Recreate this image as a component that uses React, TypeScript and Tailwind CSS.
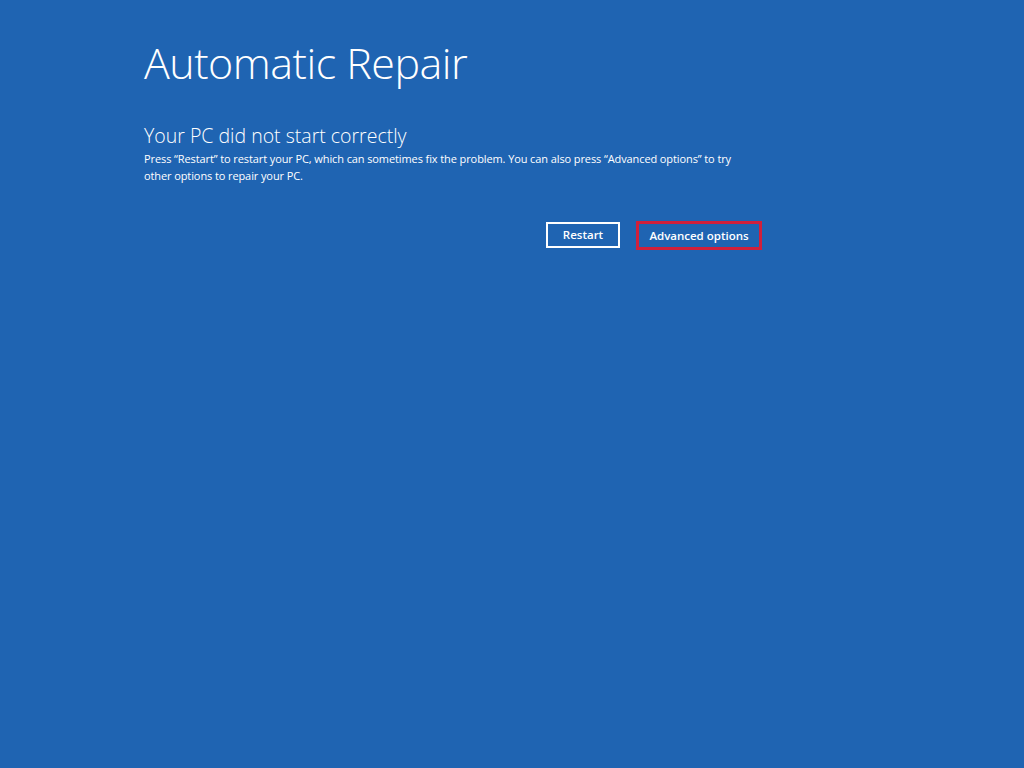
export default function App() {
  return (
    <div className="w-[1024px] h-[768px] bg-[#1f64b2] text-white font-['Open_Sans',sans-serif] overflow-hidden">
      <div className="pl-[144px] pt-[35px] w-[764px]">
        <h1 className="text-[43px] font-light leading-[56px] tracking-[-0.5px]">Automatic Repair</h1>
        <h2 className="mt-[32px] text-[19.5px] font-light leading-[26px]">Your PC did not start correctly</h2>
        <p className="text-[11px] leading-[17px] mt-[1px] w-[612px] tracking-[-0.1px]">
          Press “Restart” to restart your PC, which can sometimes fix the problem. You can also press “Advanced options” to try other options to repair your PC.
        </p>
        <div className="flex justify-end gap-[16px] mt-[38px] pr-[2px]">
          <button className="h-[26px] w-[74px] border-2 border-white text-[11.5px] font-semibold leading-none">Restart</button>
          <button className="h-[29px] w-[126px] -mt-[1px] border-[3px] border-[#d0203c] text-[11.5px] font-semibold leading-none">Advanced options</button>
        </div>
      </div>
    </div>
  )
}
